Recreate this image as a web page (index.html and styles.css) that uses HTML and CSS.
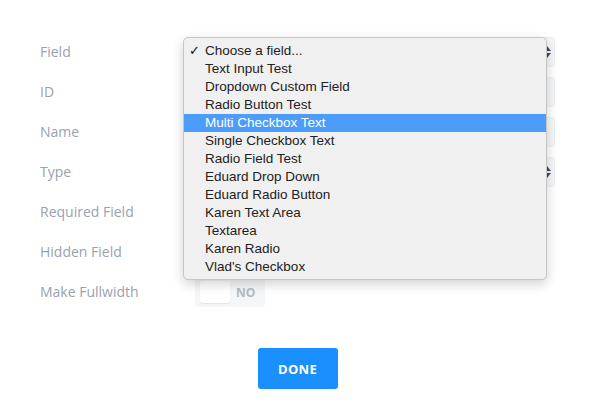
FILE: index.html
```html
<!DOCTYPE html>
<html>
<head>
<meta charset="utf-8">
<link rel="stylesheet" href="styles.css">
</head>
<body>
<div class="modal">
  <div class="form">
    <div class="row"><div class="label">Field</div><div class="control select"><span class="arrows"></span></div></div>
    <div class="row"><div class="label">ID</div><div class="control input"></div></div>
    <div class="row"><div class="label">Name</div><div class="control input"></div></div>
    <div class="row"><div class="label">Type</div><div class="control select"><span class="arrows"></span></div></div>
    <div class="row"><div class="label">Required Field</div><div class="toggle"><span class="knob"></span></div></div>
    <div class="row"><div class="label">Hidden Field</div><div class="toggle"><span class="knob"></span></div></div>
    <div class="row"><div class="label">Make Fullwidth</div><div class="toggle"><span class="knob"></span><span class="no">NO</span></div></div>
  </div>
  <div class="actions"><button class="done">DONE</button></div>
  <ul class="menu">
    <li class="checked">Choose a field...</li>
    <li>Text Input Test</li>
    <li>Dropdown Custom Field</li>
    <li>Radio Button Test</li>
    <li class="active">Multi Checkbox Text</li>
    <li>Single Checkbox Text</li>
    <li>Radio Field Test</li>
    <li>Eduard Drop Down</li>
    <li>Eduard Radio Button</li>
    <li>Karen Text Area</li>
    <li>Textarea</li>
    <li>Karen Radio</li>
    <li>Vlad's Checkbox</li>
  </ul>
</div>
</body>
</html>
```
FILE: styles.css
```css
html, body { margin: 0; padding: 0; background: #fff; }
body { width: 592px; height: 415px; overflow: hidden; font-family: "Open Sans", "Liberation Sans", sans-serif; }
.modal { position: relative; padding: 37px 37px 0 40px; }
.form { display: flex; flex-direction: column; gap: 10px; }
.row { display: flex; align-items: center; height: 30px; }
.label { width: 155px; font-size: 14px; color: #9ba1ad; margin-top: -2px; }
.control { flex: 1; height: 28px; background: #f5f6f8; border: 1px solid #eceef1; border-radius: 4px; position: relative; }
.arrows { position: absolute; right: 3px; top: 8px; width: 0; height: 0; }
.arrows::before, .arrows::after { content: ""; position: absolute; left: -8px; border-left: 4px solid transparent; border-right: 4px solid transparent; }
.arrows::before { top: 0; border-bottom: 5px solid #3d4a63; }
.arrows::after { top: 7px; border-top: 5px solid #3d4a63; }
.toggle { display: flex; align-items: center; gap: 6px; width: 70px; height: 30px; box-sizing: border-box; padding: 0 5px; background: #f4f6f8; border-radius: 3px; }
.knob { width: 30px; height: 22px; background: #fff; border-radius: 3px; box-shadow: 0 1px 1px rgba(0,0,0,0.08); }
.no { font-size: 12px; font-weight: 700; color: #b4b9c2; }
.actions { display: flex; justify-content: center; margin-top: 41px; }
.done { width: 80px; height: 41px; border: 0; border-radius: 3px; background: #1a8ffe; color: #fff; font-family: "Open Sans", sans-serif; font-weight: 700; font-size: 13px; letter-spacing: 0.3px; }
.menu { position: absolute; left: 183px; top: 37px; width: 364px; height: 243px; box-sizing: border-box; margin: 0; padding: 4px 0; list-style: none; background: #f0f0f0; border: 1px solid #c6c6c6; border-radius: 5px; box-shadow: 0 4px 12px rgba(0,0,0,0.18); font-family: "Liberation Sans", Arial, sans-serif; font-size: 13.5px; color: #222; }
.menu li { height: 18px; line-height: 18px; padding-left: 21px; position: relative; }
.menu li.active { background: #4c9cfc; color: #fff; }
.menu li.checked::before { content: "✓"; position: absolute; left: 5px; top: 0; font-family: "DejaVu Sans", sans-serif; font-size: 13px; font-weight: 700; color: #111; }
```
